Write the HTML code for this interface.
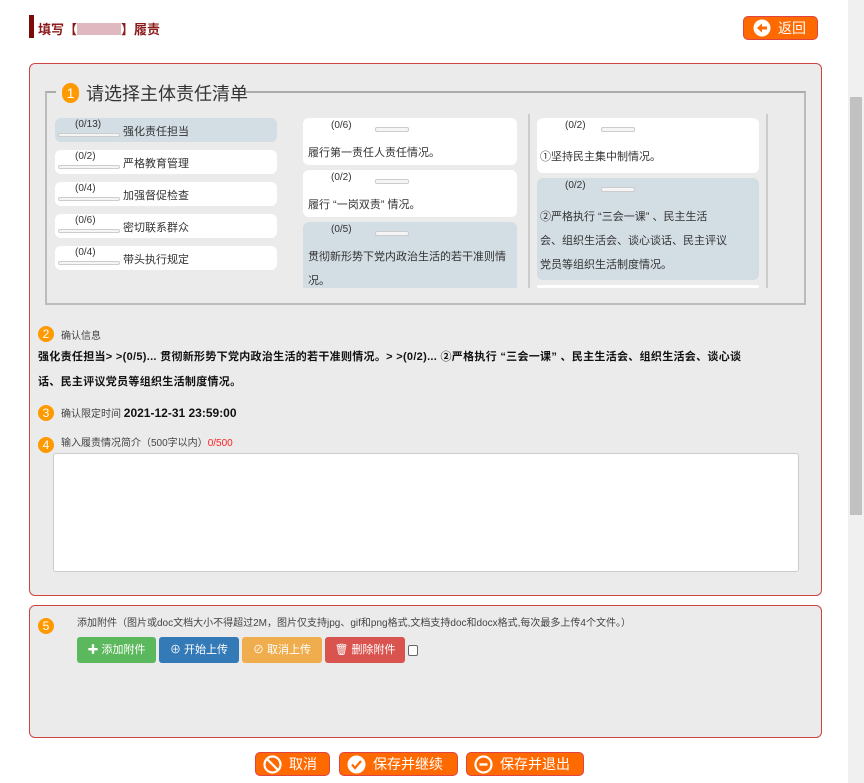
<!DOCTYPE html>
<html><head><meta charset="utf-8"><style>
*{box-sizing:border-box;margin:0;padding:0}
body{width:864px;height:783px;background:#fff;font-family:"Liberation Sans","Noto Sans CJK SC",sans-serif;position:relative;overflow:hidden;color:#333}
.a{position:absolute}
.num{position:absolute;width:16px;height:16px;border-radius:50%;background:#f90;color:#fff;font-size:12px;text-align:center;line-height:16px}
.li{position:absolute;left:55px;width:222px;height:24px;background:#fff;border-radius:6px;font-size:11px}
.li .c{position:absolute;left:20px;top:1px;font-size:10px}
.li .b{position:absolute;left:3px;top:15px;width:62px;height:4px;border:1px solid #ccc;border-radius:2px;background:#f5f5f5}
.li .t{position:absolute;left:68px;top:5px}
.cd{position:absolute;background:#fff;border-radius:6px;font-size:11px;overflow:hidden}
.cd .c{position:absolute;left:28px;top:2px;font-size:10px}
.cd .b{position:absolute;left:72px;top:9px;width:34px;height:5px;border:1px solid #ccc;border-radius:2px;background:#f5f5f5}
.cd .t{position:absolute;left:5px;line-height:24px;white-space:nowrap}
.btn{position:absolute;top:637px;height:26px;border-radius:3px;color:#fff;font-size:11px;line-height:26px;text-align:center}
.ob{position:absolute;background:#ff6a00;border:1px solid #d44;border-radius:5px;color:#fff;font-size:14px;line-height:22px;display:flex;align-items:center;padding-left:7px}
.ob svg{margin-right:7px}
</style></head><body>
<div class="a" style="left:29px;top:15px;width:5px;height:23px;background:#7b0a0a"></div>
<div class="a" style="left:38px;top:19px;font-size:13px;font-weight:bold;color:#8b1a1a">填写【<span style="display:inline-block;width:44px;height:12px;background:#e0b9c0;vertical-align:-1px"></span>】履责</div>
<div class="ob" style="left:743px;top:16px;width:75px;height:24px;padding-left:9px"><svg width="18" height="18" viewBox="0 0 18 18"><circle cx="9" cy="9" r="8.5" fill="#fff"/><path d="M4 9l5-4.5v3h5v3H9v3z" fill="#ff6a00"/></svg>返回</div>

<div class="a" style="left:29px;top:63px;width:793px;height:533px;background:#ebebeb;border:1px solid #c44;border-radius:6px"></div>
<div class="a" style="left:45px;top:91px;width:761px;height:214px;border:2px solid #bbb;border-top-color:#aaa"></div>
<div class="a" style="left:56px;top:78px;width:190px;height:28px;background:#ebebeb"></div>
<div class="num" style="left:62px;top:83px;width:17px;height:20px;border-radius:9px;font-size:14px;line-height:20px">1</div>
<div class="a" style="left:86px;top:80px;font-size:18px;color:#333">请选择主体责任清单</div>

<div class="li" style="top:118px;background:#d3dde4"><span class="c">(0/13)</span><span class="b"></span><span class="t">强化责任担当</span></div>
<div class="li" style="top:150px"><span class="c">(0/2)</span><span class="b"></span><span class="t">严格教育管理</span></div>
<div class="li" style="top:182px"><span class="c">(0/4)</span><span class="b"></span><span class="t">加强督促检查</span></div>
<div class="li" style="top:214px"><span class="c">(0/6)</span><span class="b"></span><span class="t">密切联系群众</span></div>
<div class="li" style="top:246px"><span class="c">(0/4)</span><span class="b"></span><span class="t">带头执行规定</span></div>

<div class="cd" style="left:303px;top:118px;width:214px;height:47px"><span class="c">(0/6)</span><span class="b"></span><span class="t" style="top:23px">履行第一责任人责任情况。</span></div>
<div class="cd" style="left:303px;top:170px;width:214px;height:47px"><span class="c">(0/2)</span><span class="b"></span><span class="t" style="top:23px">履行 “一岗双责” 情况。</span></div>
<div class="cd" style="left:303px;top:222px;width:214px;height:66px;background:#d3dde4;border-radius:6px 6px 0 0"><span class="c">(0/5)</span><span class="b"></span><span class="t" style="top:23px">贯彻新形势下党内政治生活的若干准则情<br>况。</span></div>
<div class="a" style="left:528px;top:114px;width:2px;height:174px;background:#ccc"></div>

<div class="cd" style="left:537px;top:118px;width:222px;height:55px"><span class="c">(0/2)</span><span class="b" style="left:64px"></span><span class="t" style="top:27px;left:3px">①坚持民主集中制情况。</span></div>
<div class="cd" style="left:537px;top:178px;width:222px;height:102px;background:#d3dde4"><span class="c">(0/2)</span><span class="b" style="left:64px;top:9px"></span><span class="t" style="top:27px;left:3px">②严格执行 “三会一课” 、民主生活<br>会、组织生活会、谈心谈话、民主评议<br>党员等组织生活制度情况。</span></div>
<div class="cd" style="left:537px;top:285px;width:222px;height:3px"></div>
<div class="a" style="left:766px;top:114px;width:2px;height:174px;background:#ccc"></div>

<div class="num" style="left:38px;top:326px">2</div>
<div class="a" style="left:61px;top:327px;font-size:10px;color:#444">确认信息</div>
<div class="a" style="left:38px;top:345px;font-size:11px;font-weight:bold;color:#111;line-height:25px;white-space:nowrap;letter-spacing:0.3px">强化责任担当&gt; &gt;(0/5)... 贯彻新形势下党内政治生活的若干准则情况。&gt; &gt;(0/2)... ②严格执行 “三会一课” 、民主生活会、组织生活会、谈心谈<br>话、民主评议党员等组织生活制度情况。</div>
<div class="num" style="left:38px;top:405px">3</div>
<div class="a" style="left:61px;top:405px;font-size:10px;color:#444">确认限定时间 <b style="font-size:12px;color:#111">2021-12-31 23:59:00</b></div>
<div class="num" style="left:38px;top:437px">4</div>
<div class="a" style="left:61px;top:434px;font-size:10px;color:#444">输入履责情况简介（500字以内）<span style="color:#f22">0/500</span></div>
<div class="a" style="left:53px;top:453px;width:746px;height:119px;background:#fff;border:1px solid #ccc;border-radius:3px"></div>

<div class="a" style="left:29px;top:605px;width:793px;height:133px;background:#ebebeb;border:1px solid #c44;border-radius:6px"></div>
<div class="num" style="left:38px;top:618px">5</div>
<div class="a" style="left:77px;top:614px;font-size:10px;color:#444">添加附件（图片或doc文档大小不得超过2M，图片仅支持jpg、gif和png格式,文档支持doc和docx格式,每次最多上传4个文件。）</div>
<div class="btn" style="left:77px;width:79px;background:#5cb85c"><b>✚</b> 添加附件</div>
<div class="btn" style="left:159px;width:80px;background:#337ab7">⊕ 开始上传</div>
<div class="btn" style="left:242px;width:80px;background:#f0ad4e">⊘ 取消上传</div>
<div class="btn" style="left:325px;width:80px;background:#d9534f">🗑 删除附件</div>
<div class="a" style="left:408px;top:645px;width:10px;height:11px;border:1px solid #666;border-radius:2px;background:#fff"></div>

<div class="ob" style="left:255px;top:752px;width:75px;height:24px"><svg width="19" height="19" viewBox="0 0 19 19"><circle cx="9.5" cy="9.5" r="8" fill="none" stroke="#fff" stroke-width="2.2"/><path d="M4 4l11 11" stroke="#fff" stroke-width="2.2"/></svg>取消</div>
<div class="ob" style="left:339px;top:752px;width:119px;height:24px"><svg width="19" height="19" viewBox="0 0 19 19"><circle cx="9.5" cy="9.5" r="9" fill="#fff"/><path d="M5 9.5l3 3.5 6-7" fill="none" stroke="#ff6a00" stroke-width="2.2"/></svg>保存并继续</div>
<div class="ob" style="left:466px;top:752px;width:118px;height:24px"><svg width="19" height="19" viewBox="0 0 19 19"><circle cx="9.5" cy="9.5" r="8" fill="none" stroke="#fff" stroke-width="2.2"/><path d="M5.5 9.5h8" stroke="#fff" stroke-width="2.4"/></svg>保存并退出</div>

<div class="a" style="left:848px;top:0;width:16px;height:783px;background:#f0f0f0"></div>
<div class="a" style="left:850px;top:97px;width:12px;height:418px;background:#c1c1c1"></div>
</body></html>
